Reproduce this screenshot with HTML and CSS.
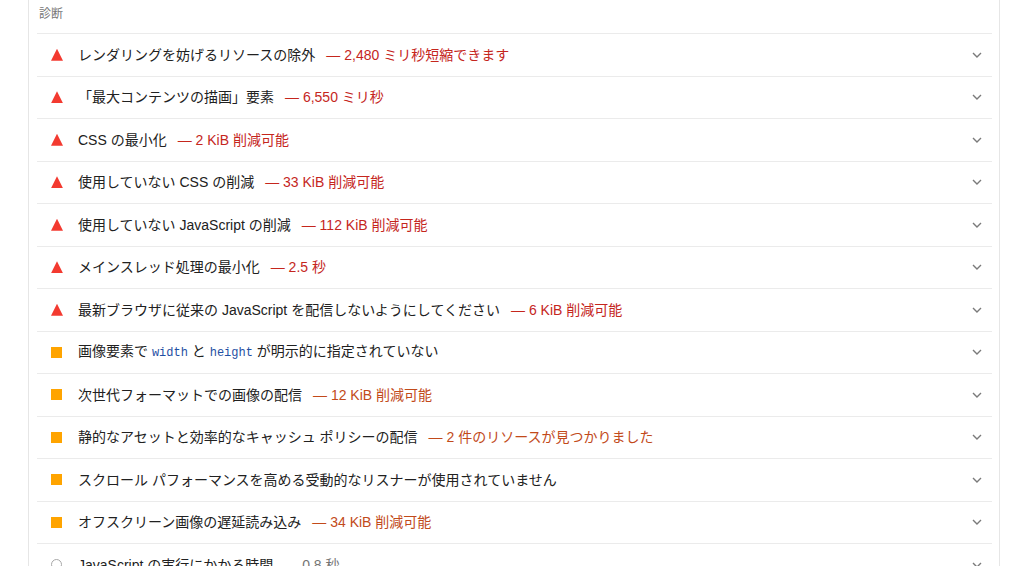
FILE: index.html
```html
<!DOCTYPE html>
<html lang="ja">
<head>
<meta charset="utf-8">
<title>診断</title>
<link rel="stylesheet" href="styles.css">
</head>
<body>
<div class="card">
  <div class="group-title">診断</div>
  <div class="audit fail">
    <span class="icon"></span>
    <span class="title">レンダリングを妨げるリソースの除外</span>
    <span class="value">— 2,480 ミリ秒短縮できます</span>
    <svg class="chev" width="10" height="6" viewBox="0 0 10 6"><polyline points="1,1 5,5 9,1"/></svg>
  </div>
  <div class="audit fail">
    <span class="icon"></span>
    <span class="title">「最大コンテンツの描画」要素</span>
    <span class="value">— 6,550 ミリ秒</span>
    <svg class="chev" width="10" height="6" viewBox="0 0 10 6"><polyline points="1,1 5,5 9,1"/></svg>
  </div>
  <div class="audit fail">
    <span class="icon"></span>
    <span class="title">CSS の最小化</span>
    <span class="value">— 2 KiB 削減可能</span>
    <svg class="chev" width="10" height="6" viewBox="0 0 10 6"><polyline points="1,1 5,5 9,1"/></svg>
  </div>
  <div class="audit fail">
    <span class="icon"></span>
    <span class="title">使用していない CSS の削減</span>
    <span class="value">— 33 KiB 削減可能</span>
    <svg class="chev" width="10" height="6" viewBox="0 0 10 6"><polyline points="1,1 5,5 9,1"/></svg>
  </div>
  <div class="audit fail">
    <span class="icon"></span>
    <span class="title">使用していない JavaScript の削減</span>
    <span class="value">— 112 KiB 削減可能</span>
    <svg class="chev" width="10" height="6" viewBox="0 0 10 6"><polyline points="1,1 5,5 9,1"/></svg>
  </div>
  <div class="audit fail">
    <span class="icon"></span>
    <span class="title">メインスレッド処理の最小化</span>
    <span class="value">— 2.5 秒</span>
    <svg class="chev" width="10" height="6" viewBox="0 0 10 6"><polyline points="1,1 5,5 9,1"/></svg>
  </div>
  <div class="audit fail">
    <span class="icon"></span>
    <span class="title">最新ブラウザに従来の JavaScript を配信しないようにしてください</span>
    <span class="value">— 6 KiB 削減可能</span>
    <svg class="chev" width="10" height="6" viewBox="0 0 10 6"><polyline points="1,1 5,5 9,1"/></svg>
  </div>
  <div class="audit average">
    <span class="icon"></span>
    <span class="title">画像要素で <code>width</code> と <code>height</code> が明示的に指定されていない</span>
    <svg class="chev" width="10" height="6" viewBox="0 0 10 6"><polyline points="1,1 5,5 9,1"/></svg>
  </div>
  <div class="audit average">
    <span class="icon"></span>
    <span class="title">次世代フォーマットでの画像の配信</span>
    <span class="value">— 12 KiB 削減可能</span>
    <svg class="chev" width="10" height="6" viewBox="0 0 10 6"><polyline points="1,1 5,5 9,1"/></svg>
  </div>
  <div class="audit average">
    <span class="icon"></span>
    <span class="title">静的なアセットと効率的なキャッシュ ポリシーの配信</span>
    <span class="value">— 2 件のリソースが見つかりました</span>
    <svg class="chev" width="10" height="6" viewBox="0 0 10 6"><polyline points="1,1 5,5 9,1"/></svg>
  </div>
  <div class="audit average">
    <span class="icon"></span>
    <span class="title">スクロール パフォーマンスを高める受動的なリスナーが使用されていません</span>
    <svg class="chev" width="10" height="6" viewBox="0 0 10 6"><polyline points="1,1 5,5 9,1"/></svg>
  </div>
  <div class="audit average">
    <span class="icon"></span>
    <span class="title">オフスクリーン画像の遅延読み込み</span>
    <span class="value">— 34 KiB 削減可能</span>
    <svg class="chev" width="10" height="6" viewBox="0 0 10 6"><polyline points="1,1 5,5 9,1"/></svg>
  </div>
  <div class="audit info">
    <span class="icon"></span>
    <span class="title">JavaScript の実行にかかる時間</span>
    <span class="value">— 0.8 秒</span>
    <svg class="chev" width="10" height="6" viewBox="0 0 10 6"><polyline points="1,1 5,5 9,1"/></svg>
  </div>
</div>
</body>
</html>
```

FILE: styles.css
```css
html, body {
  margin: 0;
  padding: 0;
  background: #ffffff;
  overflow: hidden;
}
body {
  font-family: "Liberation Sans", "Noto Sans CJK JP", sans-serif;
  color: #212121;
  font-size: 14px;
}
.card {
  margin-left: 28px;
  width: 955px;
  border-left: 1px solid #e6e6e6;
  border-right: 1px solid #e6e6e6;
  padding: 0 7px 0 8px;
}
.group-title {
  height: 27px;
  padding-left: 2px;
  padding-top: 6px;
  font-size: 12px;
  line-height: 16px;
  color: #757575;
  border-bottom: 1px solid #ebebeb;
  box-sizing: border-box;
  height: 34px;
}
.audit {
  display: flex;
  align-items: center;
  height: 42.5px;
  box-sizing: border-box;
  border-bottom: 1px solid #ebebeb;
  padding-left: 14px;
  padding-right: 10px;
  line-height: 20px;
  white-space: nowrap;
}
.icon {
  flex: none;
  width: 12px;
  height: 12px;
  margin-right: 15px;
  box-sizing: border-box;
}
.fail .icon {
  background: #f33a30;
  clip-path: polygon(50% 0, 100% 100%, 0 100%);
}
.average .icon {
  width: 11px;
  height: 11px;
  margin-right: 16px;
  background: #ffa400;
}
.info .icon {
  width: 11px;
  height: 11px;
  margin-right: 16px;
  border: 1.5px solid #a8a8a8;
  border-radius: 50%;
}
.title code {
  font-family: "Liberation Mono", monospace;
  font-size: 12px;
  color: #1f4fa3;
}
.value {
  margin-left: 11px;
}
.fail .value {
  color: #c5261d;
}
.average .value {
  color: #c24a1a;
}
.info .value {
  color: #757575;
}
.chev {
  margin-left: auto;
  flex: none;
}
.chev polyline {
  fill: none;
  stroke: #7a7a7a;
  stroke-width: 1.4;
}
```
